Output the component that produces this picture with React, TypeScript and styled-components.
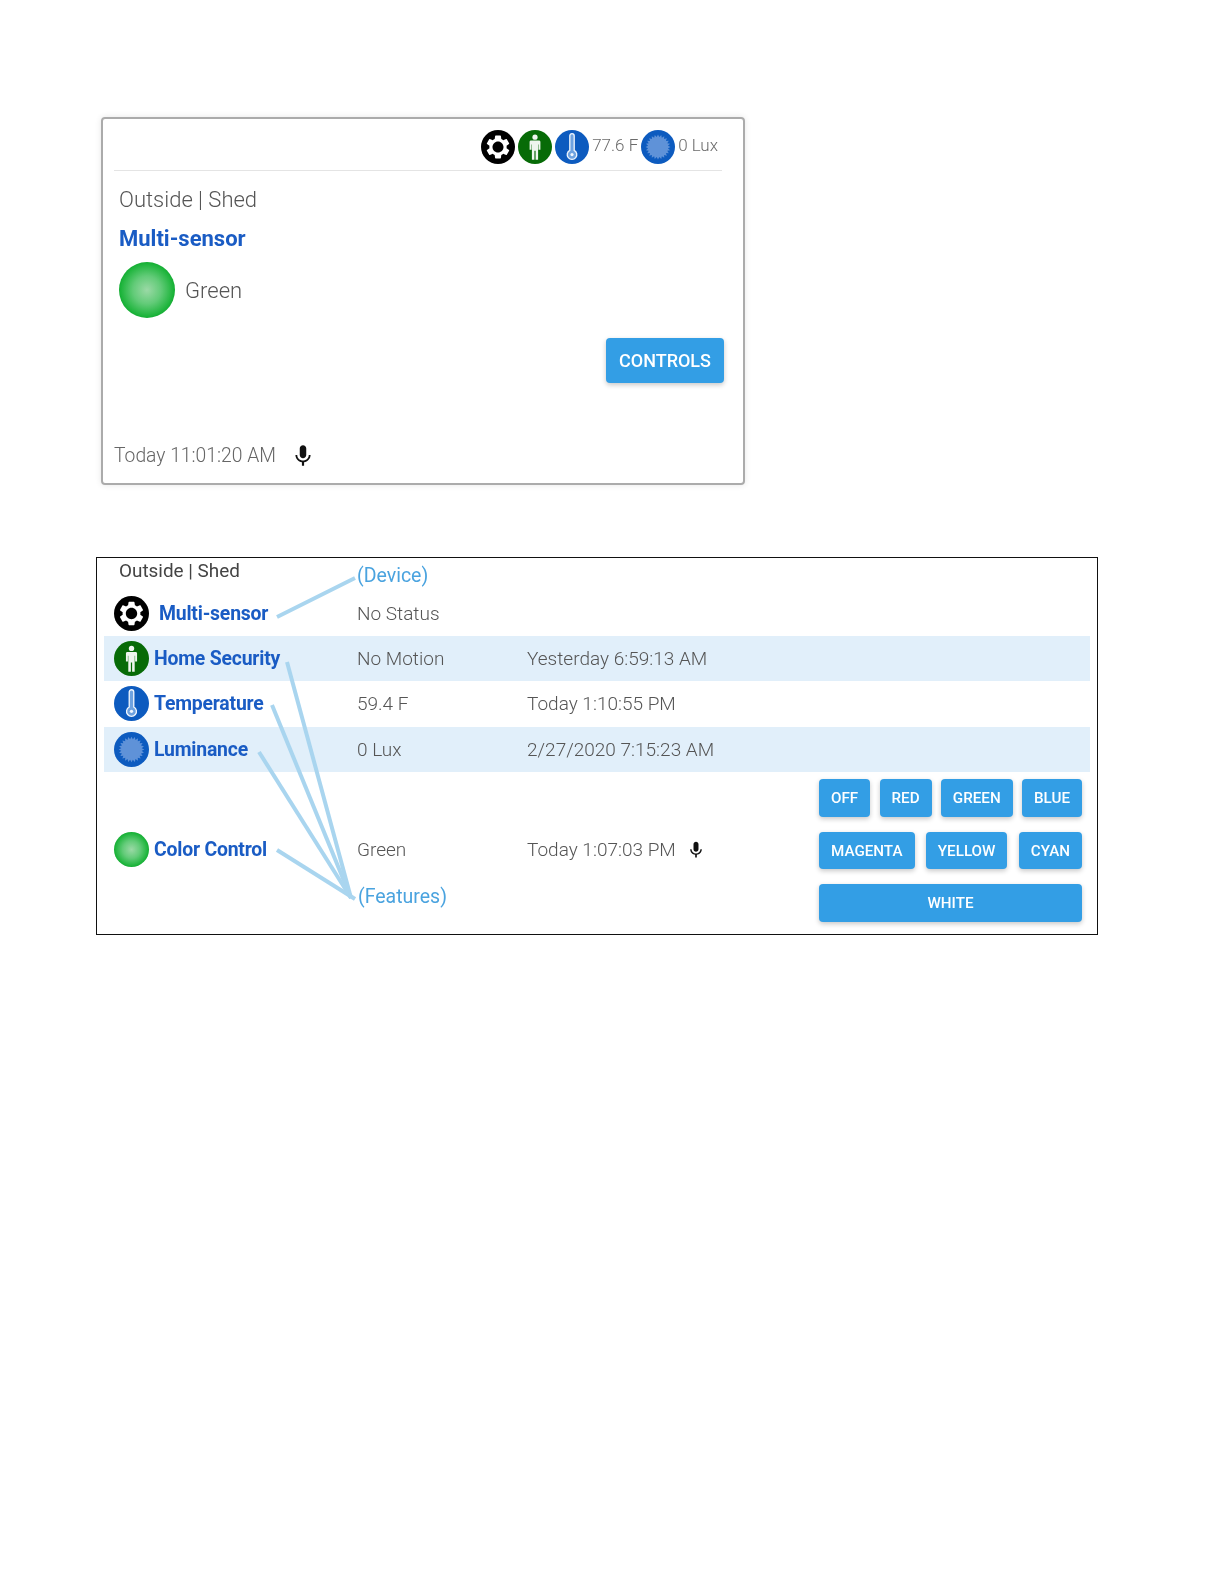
import React from "react";
import styled, { createGlobalStyle } from "styled-components";
import { MdMic } from "react-icons/md";

const Global = createGlobalStyle`
  html, body { margin: 0; background: #fff; }
  body { font-family: Roboto, "Liberation Sans", sans-serif; }
`;

const Page = styled.div`
  width: 1224px;
  height: 1584px;
  box-sizing: border-box;
  padding: 117px 0 0 96px;
  filter: blur(0.4px);
`;

const Card = styled.section`
  margin-left: 5px;
  width: 644px;
  height: 368px;
  box-sizing: border-box;
  display: flex;
  flex-direction: column;
  border: 2px solid #ababab;
  border-radius: 4px;
  box-shadow: 0 0 6px rgba(0, 0, 0, 0.1);
`;

const CardHeader = styled.header`
  height: 52px;
  margin: 0 21px 0 11px;
  padding: 4px 4px 0 0;
  box-sizing: border-box;
  display: flex;
  justify-content: flex-end;
  align-items: center;
  gap: 3px;
  border-bottom: 1px solid #e4e4e4;
`;

const HeaderText = styled.span`
  font-weight: 300;
  font-size: 17px;
  color: #6b6b6b;
  margin-bottom: 3px;
`;

const CardBody = styled.div`
  padding: 14px 19px 0 16px;
  display: flex;
  flex-direction: column;
`;

const CardTitle = styled.div`
  font-size: 22px;
  font-weight: 300;
  line-height: 30px;
  color: #555;
`;

const CardName = styled.div`
  font-size: 22px;
  font-weight: 700;
  line-height: 30px;
  margin-top: 9px;
  color: #1a5cc4;
`;

const ColorRow = styled.div`
  display: flex;
  align-items: center;
  gap: 10px;
  margin-top: 8px;
`;

const ColorLabel = styled.span`
  font-size: 22px;
  font-weight: 300;
  color: #555;
`;

const Dot = styled.span<{ $size: number }>`
  flex: none;
  width: ${(p) => p.$size}px;
  height: ${(p) => p.$size}px;
  border-radius: 50%;
  background: radial-gradient(circle closest-side, #9bd9a6 0%, #62cb78 50%, #1fb53d 92%, #14ad33 100%);
`;

const Raised = styled.button<{ $h?: number; $fs?: number; $wide?: boolean }>`
  height: ${(p) => p.$h ?? 38}px;
  padding: 0 12px;
  flex: ${(p) => (p.$wide ? "1" : "none")};
  border: 0;
  border-radius: 4px;
  background: #339ee5;
  color: #fff;
  font-family: Roboto, sans-serif;
  font-weight: 500;
  font-size: ${(p) => p.$fs ?? 15.2}px;
  box-shadow: 0 2px 5px rgba(0, 0, 0, 0.22);
`;

const ControlsButton = styled(Raised)`
  align-self: flex-end;
  margin-top: 20px;
  width: 118px;
  padding: 0;
`;

const CardFooter = styled.footer`
  margin-top: auto;
  padding: 0 0 12px 11px;
  display: flex;
  align-items: center;
  gap: 14px;
  font-size: 19.3px;
  font-weight: 300;
  line-height: 30px;
  color: #666;
`;

const Table = styled.section`
  position: relative;
  margin-top: 72px;
  width: 1002px;
  height: 378px;
  box-sizing: border-box;
  border: 1px solid #111;
  padding: 0 7px;
`;

const TitleRow = styled.div`
  display: grid;
  grid-template-columns: 253px 1fr;
  height: 33px;
`;

const TableTitle = styled.div`
  padding: 0 0 0 15px;
  font-size: 18.9px;
  line-height: 26px;
  color: #444;
`;

const DeviceNote = styled.div`
  font-size: 19.5px;
  font-weight: 400;
  line-height: 36px;
  color: #4aa3df;
`;

const Row = styled.div<{ $band?: boolean; $extra?: number }>`
  display: grid;
  grid-template-columns: 253px 170px 1fr;
  align-items: center;
  height: 45px;
  margin-bottom: ${(p) => p.$extra ?? 0}px;
  background: ${(p) => (p.$band ? "#e1effa" : "transparent")};
`;

const NameCell = styled.div<{ $gap?: number }>`
  padding-left: 10px;
  display: flex;
  align-items: center;
  gap: ${(p) => p.$gap ?? 5}px;
`;

const Name = styled.span`
  font-size: 19.4px;
  font-weight: 700;
  color: #1a5cc4;
  letter-spacing: -0.2px;
`;

const Value = styled.span`
  font-size: 19px;
  font-weight: 300;
  color: #555;
`;

const TimeCell = styled(Value)`
  display: flex;
  align-items: center;
  gap: 10px;
`;

const ColorSection = styled.div`
  display: grid;
  grid-template-columns: 253px 170px 292px 263px;
  align-items: center;
  padding: 7px 0 0;

  & > *:not(:last-child) {
    margin-bottom: 2px;
  }
`;

const ButtonStack = styled.div`
  display: flex;
  flex-direction: column;
  gap: 15px;
`;

const ButtonRow = styled.div`
  display: flex;
  justify-content: space-between;
`;

const FeaturesNote = styled.div`
  position: absolute;
  left: 261px;
  top: 327px;
  font-size: 19.5px;
  color: #4aa3df;
`;

const Callouts = styled.svg`
  position: absolute;
  left: -1px;
  top: -1px;
  width: 1002px;
  height: 378px;
  pointer-events: none;
`;

const CIRCLE = 34;

const burst = () => {
  const pts: string[] = [];
  for (let i = 0; i < 48; i++) {
    const r = i % 2 ? 10 : 12.5;
    const a = (i / 48) * Math.PI * 2;
    pts.push(`${(17 + r * Math.cos(a)).toFixed(2)},${(17 + r * Math.sin(a)).toFixed(2)}`);
  }
  return pts.join(" ");
};

const GEAR =
  "M19.14 12.94c.04-.3.06-.61.06-.94 0-.32-.02-.64-.07-.94l2.03-1.58c.18-.14.23-.41.12-.61l-1.92-3.32c-.12-.22-.37-.29-.59-.22l-2.39.96c-.5-.38-1.03-.7-1.62-.94l-.36-2.54c-.04-.24-.24-.41-.48-.41h-3.84c-.24 0-.43.17-.47.41l-.36 2.54c-.59.24-1.13.57-1.62.94l-2.39-.96c-.22-.08-.47 0-.59.22L2.74 8.87c-.12.21-.08.47.12.61l2.03 1.58c-.05.3-.09.63-.09.94s.02.64.07.94l-2.03 1.58c-.18.14-.23.41-.12.61l1.92 3.32c.12.22.37.29.59.22l2.39-.96c.5.38 1.03.7 1.62.94l.36 2.54c.05.24.24.41.48.41h3.84c.24 0 .44-.17.47-.41l.36-2.54c.59-.24 1.13-.56 1.62-.94l2.39.96c.22.08.47 0 .59-.22l1.92-3.32c.12-.22.07-.47-.12-.61l-2.01-1.58zM12 16.6c-2.5 0-4.6-2.1-4.6-4.6s2.1-4.6 4.6-4.6 4.6 2.1 4.6 4.6-2.1 4.6-4.6 4.6z";

const GearIcon = ({ size = CIRCLE }: { size?: number }) => (
  <svg width={size} height={size} viewBox="0 0 34 34" style={{ flex: "none" }}>
    <circle cx="17" cy="17" r="17" fill="#000" />
    <g transform="translate(2.6 2.6) scale(1.2)">
      <path d={GEAR} fill="#fff" />
    </g>
  </svg>
);

const PersonIcon = ({ size = CIRCLE }: { size?: number }) => (
  <svg width={size} height={size} viewBox="0 0 34 34" style={{ flex: "none" }}>
    <circle cx="17" cy="17" r="17" fill="#076b07" />
    <circle cx="17" cy="7.2" r="2.6" fill="#eef5ee" />
    <path
      d="M13 10.6h8c.8 0 1.4.6 1.4 1.4v7.8h-1.9v-5.4h-.4v15.4h-2.5v-9h-1.2v9h-2.5V14.4h-.4v5.4h-1.9V12c0-.8.6-1.4 1.4-1.4z"
      fill="#eef5ee"
    />
  </svg>
);

const ThermoIcon = ({ size = CIRCLE }: { size?: number }) => (
  <svg width={size} height={size} viewBox="0 0 34 34" style={{ flex: "none" }}>
    <circle cx="17" cy="17" r="17" fill="#0d5bbf" />
    <path
      d="M14.8 5.8a2.2 2.2 0 0 1 4.4 0v14.6a4.8 4.8 0 1 1-4.4 0z"
      fill="#6ea2e0"
      stroke="#f0f6fd"
      strokeWidth="1.3"
    />
    <circle cx="17" cy="24.6" r="1.6" fill="#f0f6fd" />
  </svg>
);

const LuxIcon = ({ size = CIRCLE }: { size?: number }) => (
  <svg width={size} height={size} viewBox="0 0 34 34" style={{ flex: "none" }}>
    <circle cx="17" cy="17" r="17" fill="#0d5bbf" />
    <polygon points={burst()} fill="#5f92d8" />
  </svg>
);

const Mic = ({ size }: { size: number }) => <MdMic size={size} color="#111" />;

const LINES: [number, number, number, number][] = [
  [181, 60, 259, 21],
  [191, 105, 255, 341],
  [176, 148, 255, 341],
  [163, 195, 255, 341],
  [181, 293, 259, 342],
];

export default function App() {
  return (
    <Page>
      <Global />
      <Card>
        <CardHeader>
          <GearIcon />
          <PersonIcon />
          <ThermoIcon />
          <HeaderText>77.6 F</HeaderText>
          <LuxIcon />
          <HeaderText>0 Lux</HeaderText>
        </CardHeader>
        <CardBody>
          <CardTitle>Outside | Shed</CardTitle>
          <CardName>Multi-sensor</CardName>
          <ColorRow>
            <Dot $size={56} />
            <ColorLabel>Green</ColorLabel>
          </ColorRow>
          <ControlsButton $h={45} $fs={18}>CONTROLS</ControlsButton>
        </CardBody>
        <CardFooter>
          <span>Today 11:01:20 AM</span>
          <Mic size={26} />
        </CardFooter>
      </Card>

      <Table>
        <TitleRow>
          <TableTitle>Outside | Shed</TableTitle>
          <DeviceNote>(Device)</DeviceNote>
        </TitleRow>
        <Row>
          <NameCell $gap={10}>
            <GearIcon size={35} />
            <Name>Multi-sensor</Name>
          </NameCell>
          <Value>No Status</Value>
        </Row>
        <Row $band>
          <NameCell>
            <PersonIcon size={35} />
            <Name>Home Security</Name>
          </NameCell>
          <Value>No Motion</Value>
          <Value>Yesterday 6:59:13 AM</Value>
        </Row>
        <Row $extra={1}>
          <NameCell>
            <ThermoIcon size={35} />
            <Name>Temperature</Name>
          </NameCell>
          <Value>59.4 F</Value>
          <Value>Today 1:10:55 PM</Value>
        </Row>
        <Row $band>
          <NameCell>
            <LuxIcon size={35} />
            <Name>Luminance</Name>
          </NameCell>
          <Value>0 Lux</Value>
          <Value>2/27/2020 7:15:23 AM</Value>
        </Row>
        <ColorSection>
          <NameCell>
            <Dot $size={35} />
            <Name>Color Control</Name>
          </NameCell>
          <Value>Green</Value>
          <TimeCell>
            Today 1:07:03 PM <Mic size={20} />
          </TimeCell>
          <ButtonStack>
            <ButtonRow>
              <Raised>OFF</Raised>
              <Raised>RED</Raised>
              <Raised>GREEN</Raised>
              <Raised>BLUE</Raised>
            </ButtonRow>
            <ButtonRow>
              <Raised $h={37}>MAGENTA</Raised>
              <Raised $h={37}>YELLOW</Raised>
              <Raised $h={37}>CYAN</Raised>
            </ButtonRow>
            <ButtonRow>
              <Raised $wide>WHITE</Raised>
            </ButtonRow>
          </ButtonStack>
        </ColorSection>
        <Callouts viewBox="0 0 1002 378">
          {LINES.map(([x1, y1, x2, y2], i) => (
            <line key={i} x1={x1} y1={y1} x2={x2} y2={y2} stroke="#a9d5ef" strokeWidth="4" />
          ))}
        </Callouts>
        <FeaturesNote>(Features)</FeaturesNote>
      </Table>
    </Page>
  );
}
